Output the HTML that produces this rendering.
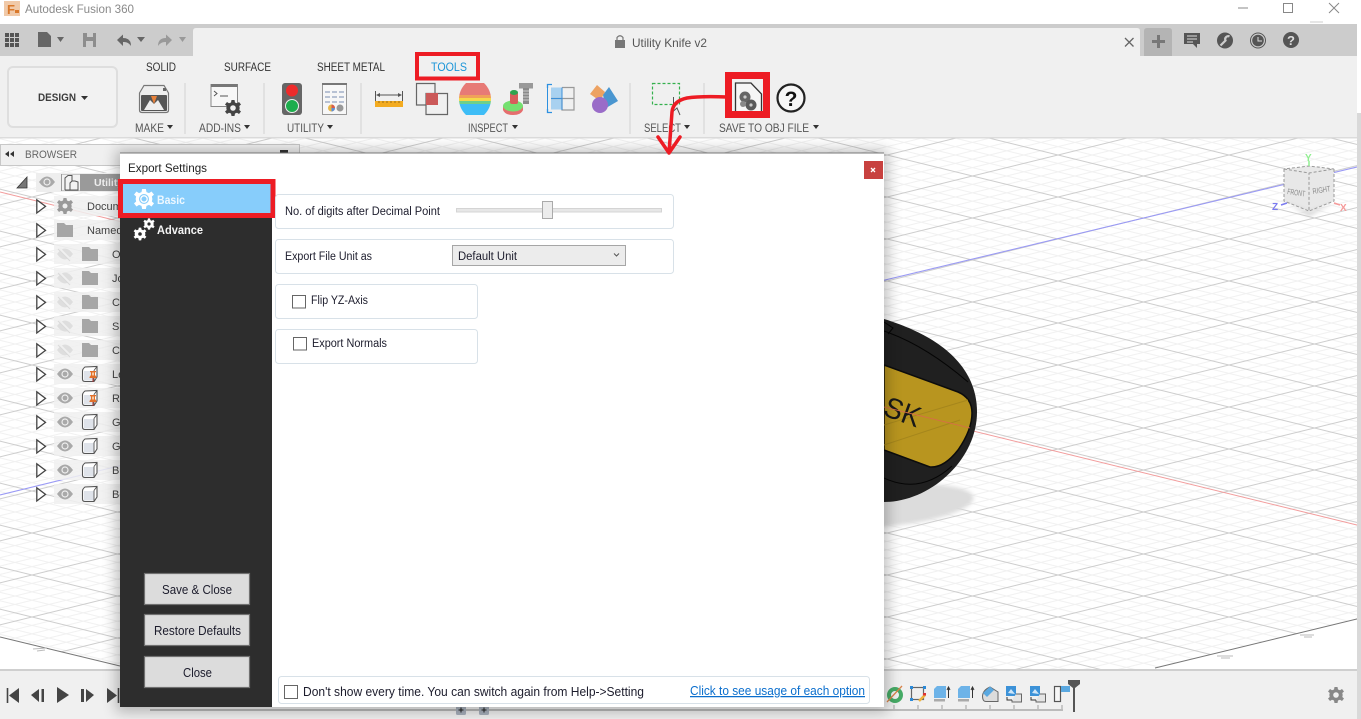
<!DOCTYPE html>
<html><head><meta charset="utf-8"><title>Export Settings</title>
<style>html,body{margin:0;padding:0;background:#fff;overflow:hidden}svg{display:block}text{font-family:"Liberation Sans",sans-serif;white-space:pre}</style></head>
<body>
<svg width="1361" height="719" viewBox="0 0 1361 719" xmlns="http://www.w3.org/2000/svg">
<defs>
<pattern id="g" x="32" y="29" width="171" height="42" patternUnits="userSpaceOnUse">
<rect width="171" height="42" fill="#fff"/>
<path d="M0 8.400L171-33.600M0 16.800L171-25.200M0 25.200L171-16.800M0 33.600L171-8.400M0 50.400L171 8.400M0 58.800L171 16.800M0 67.200L171 25.200M0 75.600L171 33.600M0-33.600L171 8.400M0-25.200L171 16.800M0-16.800L171 25.200M0-8.400L171 33.600M0 8.400L171 50.400M0 16.800L171 58.800M0 25.200L171 67.200M0 33.600L171 75.600" stroke="#f1f1f1" stroke-width="1" fill="none"/>
<path d="M0 0L171-42M0 42L171 0M0 84L171 42M0-42L171 0M0 0L171 42M0 42L171 84" stroke="#cdcdcd" stroke-width="1" fill="none"/>
</pattern>
<filter id="sh" x="-10%" y="-10%" width="120%" height="120%"><feGaussianBlur stdDeviation="7"/></filter>
<filter id="sb" x="-20%" y="-50%" width="140%" height="200%"><feGaussianBlur stdDeviation="2"/></filter>
<g id="eye"><path d="M-8 0Q-4-5.500 0-5.500Q4-5.500 8 0Q4 5.500 0 5.500Q-4 5.500-8 0Z" fill="#a9a9a9"/><circle r="3.600" fill="#eee"/><circle r="2.400" fill="#a9a9a9"/></g>
<g id="eyeoff"><path d="M-8 0Q-4-5.500 0-5.500Q4-5.500 8 0Q4 5.500 0 5.500Q-4 5.500-8 0Z" fill="#dedede"/><path d="M-6-6L6 6" stroke="#f0f0f0" stroke-width="2"/><path d="M-7-5L5 7" stroke="#dadada" stroke-width="1"/></g>
<path id="folder" d="M0 1H7L9 3H16V15H0Z" fill="#a6a6a6"/>
<path id="tri" d="M.8.8V14L9.5 7.4Z" fill="#fff" stroke="#444" stroke-width="1.300"/>
<g id="cube"><path d="M.5 5Q.5 3 3 1L15 .5V11L12 15.500H3Q.5 15.500.5 13Z" fill="#fff" stroke="#555" stroke-width="1.100"/><path d="M2 5H11.500V14.500H2Z" fill="#dfe3ea"/><path d="M12 4.500L15 .5M12 4.500V15" stroke="#555" stroke-width=".9" fill="none"/></g>
<g id="pin"><path d="M-3-5H3V-4L2-3.500V-1L3.500 1V2H-3.500V1L-2-1V-3.500L-3-4Z" fill="#e2702a"/><path d="M-1-3.500H1V-.5H-1Z" fill="#f6c8a0"/><path d="M0 2V6" stroke="#a33" stroke-width="1"/></g>
<path id="gear" d="M-1.500-8H1.500L2-5.500L4-4.700L6-6L8-3.500L6.300-2L6.700 0L6.300 2L8 3.500L6 6L4 4.700L2 5.500L1.500 8H-1.500L-2 5.500L-4 4.700L-6 6L-8 3.500L-6.300 2L-6.700 0L-6.300-2L-8-3.500L-6-6L-4-4.700L-2-5.500Z"/>
<clipPath id="gc"><path d="M0 138H1361V618L640 793L0 637Z"/></clipPath>
<clipPath id="bar"><path d="M466 83H484Q491 90 491 99Q491 108 484 115H466Q459 108 459 99Q459 90 466 83Z"/></clipPath>
</defs>

<!-- viewport -->
<rect x="0" y="138" width="1361" height="532" fill="#fff"/>
<rect x="0" y="138" width="1361" height="532" fill="url(#g)" clip-path="url(#gc)"/>
<path d="M0 192L618 344L1361 526" stroke="#f29c9c" stroke-width="1" fill="none"/>
<path d="M0 495L618 344L1361 166" stroke="#9a9af5" stroke-width="1.100" fill="none"/>
<path d="M0 637L120 666M1155 668L1361 618" stroke="#777" stroke-width="1" fill="none"/>
<path d="M1217 656H1233M1221 658H1230M1300 635H1314M1304 637H1312M33 649L47 648M37 651L45 650" stroke="#bbb" fill="none"/>

<!-- knife -->
<ellipse cx="892" cy="506" rx="82" ry="20" fill="#dcdcdc" filter="url(#sb)" transform="rotate(-6 892 506)"/>
<path d="M870 315L884 319C920 330 977 355 977 412C977 460 930 502 884 502H870Z" fill="#202020"/>
<path d="M884 331Q925 345 968 382M884 478Q920 495 952 466M884 322L893 328L888 334" stroke="#050505" fill="none"/>
<path d="M884 365L958 392Q972 398 972 413Q972 430 958 450Q944 468 930 467L884 450Z" fill="#b8951f" stroke="#0c0c0c" stroke-width="1.500"/>
<path d="M884 425L968 400M884 445L960 420" stroke="#a5861c" fill="none"/>
<text x="882" y="416" font-size="29" fill="#181818" transform="rotate(20 885 415)" textLength="37" lengthAdjust="spacingAndGlyphs">SK</text>
<path d="M884 407L970 428" stroke="#d96a4a" stroke-width=".8"/>

<!-- viewcube -->
<path d="M1284 169L1309 166L1334 169V201L1309 211L1284 201Z" fill="#e8e8e8"/>
<path d="M1287 203L1309 212L1334 203L1309 216Z" fill="#ccc" filter="url(#sb)"/>
<path d="M1284 169L1309 173L1334 169L1309 166ZM1284 169V201L1309 211V173M1334 169V201L1309 211" fill="none" stroke="#999" stroke-dasharray="3 2"/>
<text x="1287" y="194" font-size="8" fill="#888" transform="rotate(8 1287 194)" textLength="18" lengthAdjust="spacingAndGlyphs">FRONT</text>
<text x="1313" y="194" font-size="8" fill="#888" transform="rotate(-9 1313 194)" textLength="18" lengthAdjust="spacingAndGlyphs">RIGHT</text>
<text x="1305" y="161" font-size="10" font-weight="bold" fill="#90ee90">Y</text><path d="M1309 161V166" stroke="#90ee90" stroke-width="1.500"/>
<text x="1272" y="210" font-size="10" font-weight="bold" fill="#7b7bf0">Z</text><path d="M1281 205L1287 203" stroke="#7b7bf0" stroke-width="1.500"/>
<text x="1340" y="211" font-size="10" font-weight="bold" fill="#f59a9a">X</text><path d="M1334 203L1340 205" stroke="#f59a9a" stroke-width="1.500"/>

<!-- title bar -->
<rect width="1361" height="24" fill="#fff"/>
<rect x="4" y="1" width="16" height="15" fill="#f0c9a8"/>
<text x="7" y="14" font-size="13" font-weight="bold" fill="#d9782a">F</text>
<rect x="15" y="10" width="4" height="3" fill="#d9782a"/>
<text x="25" y="13" font-size="12" fill="#8a8a8a" textLength="109" lengthAdjust="spacingAndGlyphs">Autodesk Fusion 360</text>
<path d="M1238 8H1248" stroke="#888" stroke-width="1"/>
<rect x="1283.500" y="3.500" width="9" height="9" fill="none" stroke="#888"/>
<path d="M1329 3L1339 13M1339 3L1329 13" stroke="#888" fill="none"/>
<path d="M1310 22H1323" stroke="#ccc"/>

<!-- tab bar -->
<rect y="24" width="1357" height="32" fill="#cccccc"/>
<path d="M193 56V31Q193 28 196 28H1137Q1140 28 1140 31V56Z" fill="#f0f0f0"/>
<path d="M1144 56V31Q1144 28 1147 28H1169Q1172 28 1172 31V56Z" fill="#b4b4b4"/>
<path d="M1158.500 35V48M1152 41.500H1165" stroke="#777" stroke-width="3"/>
<path d="M1125 38L1133.500 46.500M1133.500 38L1125 46.500" stroke="#666" stroke-width="1.300"/>
<path d="M5 33h4v4H5zM10 33h4v4h-4zM15 33h4v4h-4zM5 38h4v4H5zM10 38h4v4h-4zM15 38h4v4h-4zM5 43h4v4H5zM10 43h4v4h-4zM15 43h4v4h-4z" fill="#555"/>
<path d="M38 32H47L51 36V47H38Z" fill="#666"/><path d="M57 37H64L60.500 42Z" fill="#666"/>
<path d="M83 33H96V47H83Z" fill="#8d8d8d"/><rect x="87" y="33" width="6" height="4" fill="#ccc"/><rect x="86" y="41" width="7" height="6" fill="#ccc"/>
<path d="M117 40L123 34.500V38Q131 38 131 46Q128 41.500 123 42V46Z" fill="#666"/><path d="M137 37H145L141 42Z" fill="#666"/>
<path d="M172 40L166 34.500V38Q158 38 158 46Q161 41.500 166 42V46Z" fill="#999"/><path d="M179 37H186L182.500 42Z" fill="#999"/>
<rect x="615" y="40" width="10" height="8" fill="#777"/><path d="M617 40V37.500Q620 34 623 37.500V40" fill="none" stroke="#777" stroke-width="1.200"/>
<text x="632" y="47" font-size="12" fill="#555" textLength="75" lengthAdjust="spacingAndGlyphs">Utility Knife v2</text>
<path d="M1184 33H1200V44H1197V48L1193 44H1184Z" fill="#555"/><path d="M1187 36H1197M1187 39H1197M1187 42H1193" stroke="#ddd"/>
<circle cx="1225" cy="40.500" r="8" fill="#555"/><path d="M1220.500 45.500L1225.500 40.500A3 3 0 0 1 1229.500 36.500" stroke="#ccc" stroke-width="2.200" fill="none"/>
<circle cx="1258" cy="40.500" r="7.500" fill="none" stroke="#555"/><circle cx="1258" cy="40.500" r="5.800" fill="#555"/><path d="M1258 37V41H1262" stroke="#ddd" fill="none"/>
<circle cx="1291" cy="40" r="8" fill="#555"/><text x="1291" y="45" text-anchor="middle" font-size="13" font-weight="bold" fill="#ddd">?</text>

<!-- toolbar -->
<rect y="56" width="1357" height="82" fill="#f0f0f0"/>
<rect y="137" width="1357" height="1.500" fill="#dcdcdc"/>
<rect x="8" y="67" width="109" height="60" rx="5" fill="#f2f2f2" stroke="#dedede" stroke-width="2"/>
<text x="38" y="101" font-size="11" font-weight="bold" fill="#3c3c3c" textLength="38" lengthAdjust="spacingAndGlyphs">DESIGN</text><path d="M81 96H88L84.500 100Z" fill="#333"/>
<g font-size="11.500" fill="#333">
<text x="146" y="71" textLength="30" lengthAdjust="spacingAndGlyphs">SOLID</text>
<text x="224" y="71" textLength="47" lengthAdjust="spacingAndGlyphs">SURFACE</text>
<text x="317" y="71" textLength="68" lengthAdjust="spacingAndGlyphs">SHEET METAL</text>
<text x="431" y="71" fill="#1b95d8" textLength="36" lengthAdjust="spacingAndGlyphs">TOOLS</text>
</g>
<g font-size="11.500" fill="#555">
<text x="135" y="132" textLength="29" lengthAdjust="spacingAndGlyphs">MAKE</text><path d="M167 125H173L170 129Z" fill="#333"/>
<text x="199" y="132" textLength="42" lengthAdjust="spacingAndGlyphs">ADD-INS</text><path d="M244 125H250L247 129Z" fill="#333"/>
<text x="287" y="132" textLength="37" lengthAdjust="spacingAndGlyphs">UTILITY</text><path d="M327 125H333L330 129Z" fill="#333"/>
<text x="468" y="132" textLength="40" lengthAdjust="spacingAndGlyphs">INSPECT</text><path d="M512 125H518L515 129Z" fill="#333"/>
<text x="644" y="132" textLength="37" lengthAdjust="spacingAndGlyphs">SELECT</text><path d="M684 125H690L687 129Z" fill="#333"/>
<text x="719" y="132" textLength="90" lengthAdjust="spacingAndGlyphs">SAVE TO OBJ FILE</text><path d="M813 125H819L816 129Z" fill="#333"/>
</g>
<path d="M185 83V134M264 83V134M361 83V134M630 83V134M704 83V134" stroke="#dcdcdc" stroke-width="1.500"/>

<!-- make -->
<path d="M139.500 93L144 85.500H164L168.500 93V110Q168.500 112.500 166 112.500H142Q139.500 112.500 139.500 110Z" fill="#eee" stroke="#777" stroke-width="1.200"/>
<rect x="141" y="95" width="26" height="16" rx="1" fill="#555"/>
<path d="M144 110L150 100L154 104L158 100L164 110Z" fill="#eee"/>
<path d="M151 96H157L154 104Z" fill="#e8813a"/><rect x="163" y="88" width="3" height="3" fill="#666"/>
<!-- add-ins -->
<rect x="211" y="84.500" width="26.500" height="22" fill="#f7f7f7" stroke="#888"/><rect x="211" y="84" width="26.500" height="3" fill="#777"/>
<path d="M214 91L217 93.500L214 96M220 96H228" stroke="#555" fill="none"/>
<use href="#gear" x="233" y="108" fill="#444"/><circle cx="233" cy="108" r="2.800" fill="#f0f0f0"/>
<!-- traffic -->
<rect x="282" y="83" width="20" height="32" rx="3" fill="#666"/>
<circle cx="292" cy="90.500" r="6" fill="#ee2b2b"/><circle cx="292" cy="106" r="6.500" fill="#1dad4d" stroke="#eee" stroke-width="1"/>
<!-- sheet -->
<rect x="322.500" y="83.500" width="24" height="31" fill="#f7f7f7" stroke="#999"/><rect x="322" y="83" width="25" height="2" fill="#777"/>
<path d="M325 91h5v2h-5zM332 91h5v2h-5zM339 91h5v2h-5zM325 96h5v2h-5zM332 96h5v2h-5zM339 96h5v2h-5zM325 101h5v2h-5zM332 101h5v2h-5zM339 101h5v2h-5z" fill="#b8c2d4"/>
<circle cx="331.500" cy="108" r="3.500" fill="#e6b64a"/><path d="M331.500 108V104.500A3.500 3.500 0 0 1 335 108Z" fill="#d85b4c"/><path d="M331.500 108H335A3.500 3.500 0 0 1 331.500 111.500Z" fill="#5b8fd8"/>
<circle cx="340" cy="108" r="3.500" fill="#999"/>
<!-- ruler -->
<path d="M375.500 91V101M402.500 91V101M377 95H401" stroke="#555" fill="none"/><path d="M376 95L380 93V97ZM402 95L398 93V97Z" fill="#555"/>
<rect x="375" y="101" width="28" height="6" fill="#f3ab20"/><path d="M379 101v2M383 101v2M387 101v2M391 101v2M395 101v2M399 101v2" stroke="#865e10" stroke-width=".8"/>
<!-- interference -->
<path d="M416.500 83.500H435V93.500H426V105H416.500Z" fill="none" stroke="#666" stroke-width="1.200"/>
<path d="M435 93.500H447.500V114.500H426V105" fill="none" stroke="#666" stroke-width="1.200"/>
<rect x="426" y="93" width="12" height="12" fill="#cb5959"/>
<!-- barrel -->
<g clip-path="url(#bar)"><rect x="455" y="83" width="40" height="12" fill="#e77a76"/><rect x="455" y="95" width="40" height="3" fill="#f0a05a"/><rect x="455" y="98" width="40" height="3" fill="#f5d84a"/><rect x="455" y="101" width="40" height="3" fill="#6fd08a"/><rect x="455" y="104" width="40" height="11" fill="#3ebdf6"/></g>
<!-- bolt -->
<path d="M519 83H533V88.500H519Z" fill="#999"/><rect x="523" y="88" width="6" height="16" fill="#8a8a8a"/><path d="M523 91H529M523 94H529M523 97H529M523 100H529" stroke="#ccc"/>
<path d="M503 106V110Q505 115 513 115Q521 115 523 110V106Z" fill="#e56e6e"/>
<ellipse cx="513" cy="106" rx="10" ry="5.500" fill="#75e070"/><rect x="510" y="92" width="8" height="12" rx="2" fill="#d95c5c"/><ellipse cx="514" cy="92.500" rx="4" ry="2.500" fill="#2fa34f"/>
<!-- display -->
<rect x="551" y="87.500" width="11" height="22" fill="#a8d1f0"/>
<path d="M562 87.500H574V98.500H551M562 98.500V110H574V98.500" stroke="#999" fill="none" stroke-width="1.200"/>
<path d="M551 98.500H562M562 87.500V110" stroke="#3c8fd8" fill="none"/>
<path d="M552 84.500H547.500V88M547.500 109V112.500H552" stroke="#2c90e0" stroke-width="1.300" fill="none"/><path d="M547.500 88V109" stroke="#2c90e0" stroke-width="1"/>
<!-- shapes -->
<path d="M597 85L605 92L600 101L590 94Z" fill="#eda262"/><path d="M609 87L618 101L606 108L603 95Z" fill="#4a96d0"/><circle cx="600" cy="105" r="8" fill="#9a6cc8"/>
<!-- select -->
<rect x="652.500" y="83.500" width="27" height="21" fill="none" stroke="#35b04d" stroke-dasharray="3 2" stroke-width="1.200"/>
<path d="M673.500 97V111L677 108L680 115" fill="#f4f4f4" stroke="#555"/>
<!-- obj -->
<path d="M735.500 83H751L761.500 94V112H735.500Z" fill="#f6f6f6" stroke="#333" stroke-width="1.300"/>
<circle cx="745" cy="97" r="5.500" fill="#666"/><circle cx="751" cy="105" r="5.500" fill="#5a5a5a"/><circle cx="743" cy="104" r="3" fill="#888"/><circle cx="745" cy="97" r="1.600" fill="#ccc"/><circle cx="751" cy="105" r="1.600" fill="#ccc"/>
<circle cx="791" cy="98" r="13.500" fill="#f7f7f7" stroke="#222" stroke-width="2.200"/>
<text x="791" y="106" text-anchor="middle" font-size="21" font-weight="bold" fill="#111">?</text>

<!-- browser -->
<rect x=".5" y="144.500" width="299" height="21" fill="#f0f0f0" stroke="#c8c8c8"/>
<path d="M5 154L9 151V157ZM10 154L14 151V157Z" fill="#333"/>
<text x="25" y="158" font-size="11" fill="#666" textLength="52" lengthAdjust="spacingAndGlyphs">BROWSER</text>
<rect x="280" y="150" width="8" height="4" fill="#333"/>
<rect x="36" y="173" width="90" height="19" fill="#eeeeee"/>
<rect x="61" y="174" width="70" height="17" fill="#9a9a9a"/>
<path d="M17 188L27 177V188Z" fill="#777" stroke="#333" stroke-width=".8"/>
<use href="#eye" x="47" y="182"/>
<rect x="62" y="174.500" width="18" height="16" fill="#f2f2f2"/>
<path d="M65 190V178L68 175.500H72V181M65 190H78V182L75 181H72L70 183V190" fill="none" stroke="#555"/>
<text x="94" y="186" font-size="10.500" font-weight="bold" fill="#eee">Utility</text>
<g fill="#f0f0f0" fill-opacity=".85">
<rect x="54" y="196" width="70" height="20"/><rect x="54" y="220" width="70" height="20"/><rect x="54" y="244" width="70" height="20"/><rect x="54" y="268" width="70" height="20"/><rect x="54" y="292" width="70" height="20"/><rect x="54" y="316" width="70" height="20"/><rect x="54" y="340" width="70" height="20"/><rect x="54" y="364" width="70" height="20"/><rect x="54" y="388" width="70" height="20"/><rect x="54" y="412" width="70" height="20"/><rect x="54" y="436" width="70" height="20"/><rect x="54" y="460" width="70" height="20"/><rect x="54" y="484" width="70" height="20"/>
</g>
<use href="#tri" x="36" y="199"/><use href="#tri" x="36" y="223"/><use href="#tri" x="36" y="247"/><use href="#tri" x="36" y="271"/><use href="#tri" x="36" y="295"/><use href="#tri" x="36" y="319"/><use href="#tri" x="36" y="343"/><use href="#tri" x="36" y="367"/><use href="#tri" x="36" y="391"/><use href="#tri" x="36" y="415"/><use href="#tri" x="36" y="439"/><use href="#tri" x="36" y="463"/><use href="#tri" x="36" y="487"/>
<use href="#gear" x="65" y="206" fill="#999"/><circle cx="65" cy="206" r="2.500" fill="#eee"/>
<use href="#folder" x="57" y="222"/>
<use href="#eyeoff" x="65" y="254"/><use href="#eyeoff" x="65" y="278"/><use href="#eyeoff" x="65" y="302"/><use href="#eyeoff" x="65" y="326"/><use href="#eyeoff" x="65" y="350"/>
<use href="#folder" x="82" y="246"/><use href="#folder" x="82" y="270"/><use href="#folder" x="82" y="294"/><use href="#folder" x="82" y="318"/><use href="#folder" x="82" y="342"/>
<use href="#eye" x="65" y="374"/><use href="#eye" x="65" y="398"/><use href="#eye" x="65" y="422"/><use href="#eye" x="65" y="446"/><use href="#eye" x="65" y="470"/><use href="#eye" x="65" y="494"/>
<use href="#cube" x="82" y="366"/><use href="#cube" x="82" y="390"/><use href="#cube" x="82" y="414"/><use href="#cube" x="82" y="438"/><use href="#cube" x="82" y="462"/><use href="#cube" x="82" y="486"/>
<use href="#pin" x="93" y="376"/><use href="#pin" x="93" y="400"/>
<g font-size="11" fill="#444">
<text x="87" y="210">Document Settings</text><text x="87" y="234">Named Views</text>
<text x="112" y="258">Origin</text><text x="112" y="282">Joints</text><text x="112" y="306">Construction</text><text x="112" y="330">Sketches</text><text x="112" y="354">Canvases</text><text x="112" y="378">Left</text><text x="112" y="402">Right</text><text x="112" y="426">Guard</text><text x="112" y="450">Guide</text><text x="112" y="474">Blade</text><text x="112" y="498">Body</text>
</g>

<!-- timeline -->
<rect y="670" width="1357" height="49" fill="#f0f0f0"/><rect y="669" width="1357" height="2" fill="#cfcfcf"/>
<path d="M7.500 688V703" stroke="#444" stroke-width="1.600"/><path d="M19 688V703L9 695.500Z" fill="#444"/>
<path d="M31 695L39 689V702ZM41.500 689H44V702H41.500Z" fill="#444"/>
<path d="M57 687V703L69 695Z" fill="#444"/>
<path d="M94 695L86 689V702ZM81 689H84V702H81Z" fill="#444"/>
<path d="M107 688V703L117 695.500Z" fill="#444"/><path d="M118.500 688V703" stroke="#444" stroke-width="1.600"/>
<path d="M150 710H1063" stroke="#bbb" stroke-width="2"/>
<path d="M894 705V710M918 705V710M942 705V710M966 705V710M990 705V710M1014 705V710M1038 705V710M1062 705V710" stroke="#bbb" stroke-width="1.500"/>
<rect x="456" y="705" width="10" height="10" rx="1.500" fill="#a8b0bc"/><path d="M461 707.500V712.500M458.500 710H463.500" stroke="#222"/>
<rect x="479" y="705" width="10" height="10" rx="1.500" fill="#a8b0bc"/><path d="M484 707.500V712.500M481.500 710H486.500" stroke="#222"/>
<!-- timeline icons -->
<circle cx="895" cy="695" r="6" fill="none" stroke="#46ab66" stroke-width="4"/><path d="M887 702L902 686" stroke="#d9834a" stroke-width="1.300"/>
<rect x="911.500" y="687.500" width="12" height="12" fill="none" stroke="#666" stroke-width="1.200"/><path d="M910 686h3v3h-3zM923 686h3v3h-3zM910 698h3v3h-3z" fill="#2c8ad8"/><path d="M919 701L925 695" stroke="#eeb33e" stroke-width="2.500"/><rect x="923" y="693" width="3" height="2.500" fill="#d33"/>
<path d="M934 689L937 686H946V698H934Z" fill="#6db3e8"/><rect x="934" y="699" width="11" height="2.500" fill="#aaa"/><path d="M948.500 698V688M947 690L948.500 687L950 690" stroke="#333" fill="none"/>
<path d="M958 689L961 686H970V698H958Z" fill="#6db3e8"/><rect x="958" y="699" width="11" height="2.500" fill="#aaa"/><path d="M972.500 698V688M971 690L972.500 687L974 690" stroke="#333" fill="none"/>
<path d="M982.500 696Q983 690 990 687L998 692V701.500H986Q982.500 701.500 982.500 696Z" fill="#dcdcdc" stroke="#666"/><path d="M983 693L990 686.500L994 690L987 697Z" fill="#5aa8e0"/>
<rect x="1006" y="686" width="10" height="10" fill="#3c92d8"/><path d="M1008 693L1011 689L1015 694Z" fill="#cfe6f8"/><path d="M1016 694H1021.500V702H1012V700" fill="#e4e4e4" stroke="#666"/><path d="M1007 697V700H1012" stroke="#333" fill="none"/>
<rect x="1030" y="686" width="10" height="10" fill="#3c92d8"/><path d="M1032 693L1035 689L1039 694Z" fill="#cfe6f8"/><path d="M1040 694H1045.500V702H1036V700" fill="#e4e4e4" stroke="#666"/><path d="M1031 697V700H1036" stroke="#333" fill="none"/>
<rect x="1054.500" y="686.500" width="6" height="15" fill="#f6f6f6" stroke="#555" stroke-width="1.200"/>
<rect x="1061" y="686" width="9" height="6" fill="#5aa8e0"/>
<path d="M1068 680H1080V684L1075 688V712H1073V688L1068 684Z" fill="#555"/>
<use href="#gear" x="1336" y="695" fill="#888"/><circle cx="1336" cy="695" r="2.800" fill="#f0f0f0"/>
<rect x="1357" y="113" width="4" height="606" fill="#d9d9d9"/>

<!-- dialog -->
<rect x="116" y="150" width="772" height="562" fill="#000" opacity=".25" filter="url(#sh)"/>
<rect x="120" y="153" width="764" height="554" fill="#fff"/>
<rect x="120" y="152.500" width="764" height="1" fill="#777"/>
<text x="128" y="172" font-size="12" fill="#222" textLength="79" lengthAdjust="spacingAndGlyphs">Export Settings</text>
<rect x="864" y="161" width="19" height="18" fill="#c8413f"/>
<path d="M871 168L875 172M875 168L871 172" stroke="#fff" stroke-width="1.300"/>
<rect x="120" y="180" width="152" height="527" fill="#2d2d2d"/>
<rect x="120.500" y="181.500" width="152.500" height="34" fill="#87cdfb" stroke="#ed1c24" stroke-width="5"/>
<use href="#gear" x="144" y="199" fill="#fff" transform="translate(-36 -49.800) scale(1.250)"/><circle cx="144" cy="199" r="5" fill="#87cdfb"/><circle cx="144" cy="199" r="3.200" fill="none" stroke="#fff" stroke-width="1.300"/>
<text x="157" y="204" font-size="12" font-weight="bold" fill="#eef8ff" textLength="28" lengthAdjust="spacingAndGlyphs">Basic</text>
<use href="#gear" x="140" y="234" fill="#fff" transform="translate(28 46.800) scale(.8)"/><circle cx="140" cy="234" r="1.800" fill="#2d2d2d"/>
<use href="#gear" x="149" y="224" fill="#fff" transform="translate(44.700 67.200) scale(.7)"/><circle cx="149" cy="224" r="1.600" fill="#2d2d2d"/>
<text x="157" y="234" font-size="12" font-weight="bold" fill="#f4f4f4" textLength="46" lengthAdjust="spacingAndGlyphs">Advance</text>

<g fill="#fff" stroke="#d8e1e8" stroke-width="1">
<rect x="275.500" y="194.500" width="398" height="34" rx="3"/>
<rect x="275.500" y="239.500" width="398" height="34" rx="3"/>
<rect x="275.500" y="284.500" width="202" height="34" rx="3"/>
<rect x="275.500" y="329.500" width="202" height="34" rx="3"/>
<rect x="278.500" y="676.500" width="591" height="27" rx="3"/>
</g>
<g font-size="11.500" fill="#1c1c2c">
<text x="285" y="215" textLength="155" lengthAdjust="spacingAndGlyphs">No. of digits after Decimal Point</text>
<text x="285" y="260" textLength="87" lengthAdjust="spacingAndGlyphs">Export File Unit as</text>
<text x="311" y="304" textLength="57" lengthAdjust="spacingAndGlyphs">Flip YZ-Axis</text>
<text x="312" y="347" textLength="75" lengthAdjust="spacingAndGlyphs">Export Normals</text>
</g>
<rect x="456.500" y="208.500" width="205" height="3.500" fill="#e7e7e7" stroke="#d4d4d4"/>
<rect x="542.500" y="201.500" width="10" height="17" fill="#ececec" stroke="#aaa"/>
<rect x="452.500" y="245.500" width="173" height="20" fill="#ececec" stroke="#a6a6a6"/>
<text x="458" y="260" font-size="11.500" fill="#1c1c2c" textLength="59" lengthAdjust="spacingAndGlyphs">Default Unit</text>
<path d="M614 253.500L616.500 256L619 253.500" stroke="#555" fill="none"/>
<rect x="292.500" y="295.500" width="13" height="12.500" fill="#fff" stroke="#666"/>
<rect x="293.500" y="337.500" width="13" height="12.500" fill="#fff" stroke="#666"/>

<g fill="#dcdcdc" stroke="#707070" stroke-width="1.200">
<rect x="144.500" y="573.500" width="105" height="31"/>
<rect x="144.500" y="614.500" width="105" height="31"/>
<rect x="144.500" y="656.500" width="105" height="31"/>
</g>
<g font-size="12.500" fill="#1c1c2c">
<text x="162" y="594" textLength="70" lengthAdjust="spacingAndGlyphs">Save &amp; Close</text>
<text x="154" y="635" textLength="87" lengthAdjust="spacingAndGlyphs">Restore Defaults</text>
<text x="183" y="677" textLength="29" lengthAdjust="spacingAndGlyphs">Close</text>
</g>
<rect x="284.500" y="685.500" width="13" height="13" fill="#fff" stroke="#666"/>
<text x="303" y="696" font-size="12.500" fill="#1c1c2c" textLength="341" lengthAdjust="spacingAndGlyphs">Don't show every time. You can switch again from Help-&gt;Setting</text>
<text x="690" y="695" font-size="12.500" fill="#0a6ecd" text-decoration="underline" textLength="175" lengthAdjust="spacingAndGlyphs">Click to see usage of each option</text>

<!-- annotations -->
<rect x="417" y="54" width="61" height="24.500" fill="none" stroke="#ed1c24" stroke-width="4"/>
<rect x="728.500" y="75.500" width="38" height="39" fill="none" stroke="#ed1c24" stroke-width="7"/>
<path d="M727 97Q700 96 687 98Q673 101 672 112L669 153M658 137L669 153L680 137" fill="none" stroke="#ed1c24" stroke-width="3.500" stroke-linecap="round" stroke-linejoin="round"/>
</svg>
</body></html>
